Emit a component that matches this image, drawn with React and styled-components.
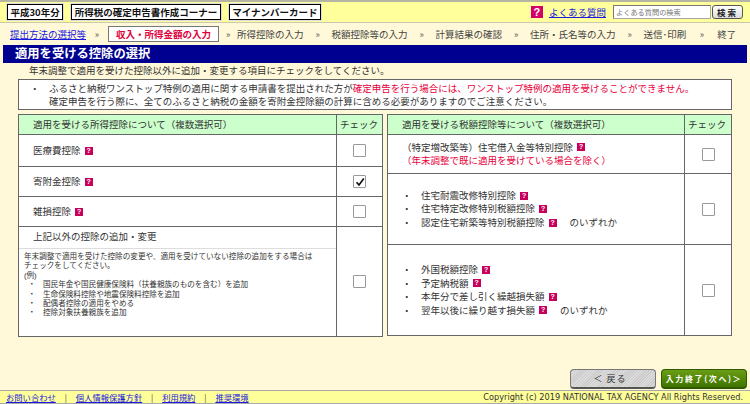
import React from 'react';
import styled, { createGlobalStyle } from 'styled-components';

const GlobalStyle = createGlobalStyle`
  html, body {
    margin: 0;
    padding: 0;
    background: #fff8d9;
  }
  body {
    font-family: "Noto Sans CJK JP", "Liberation Sans", sans-serif;
    font-size: 10px;
    color: #333;
  }
`;

const Page = styled.div`
  width: 750px;
  height: 404px;
  overflow: hidden;
  display: flex;
  flex-direction: column;
  position: relative;
`;

const TopBar = styled.div`
  height: 20px;
  border-top: 2px solid #b5b5a5;
  border-bottom: 1px solid #c9c9b0;
  background: #ffff9c;
  display: flex;
  align-items: center;
  padding: 0 7px 0 7px;
  gap: 8px;
`;

const Badge = styled.div`
  height: 14px;
  line-height: 14px;
  border: 1px solid #000;
  outline: 1px solid #ddd;
  background: #fff;
  color: #111;
  font-weight: 700;
  font-size: 9.5px;
  padding: 0 2.5px;
  white-space: nowrap;
`;

const TopRight = styled.div`
  margin-left: auto;
  display: flex;
  align-items: center;
`;

const HelpBig = styled.span`
  width: 12px;
  height: 12px;
  background: #d6006c;
  color: #fff;
  font: 700 11px/12px "Liberation Sans", sans-serif;
  text-align: center;
  margin-right: 6px;
`;

const Link = styled.a`
  color: #1a1ae0;
  text-decoration: underline;
  font-size: ${(p) => p.$size || 10}px;
  white-space: nowrap;
`;

const SearchBox = styled.div`
  width: 94px;
  height: 12px;
  line-height: 12px;
  margin-left: 7px;
  background: #fff;
  border: 1px solid #aaa;
  border-top-color: #777;
  border-left-color: #777;
  color: #777;
  font-size: 7.2px;
  padding-left: 2px;
  white-space: nowrap;
`;

const SearchButton = styled.div`
  width: 29px;
  height: 12px;
  line-height: 12px;
  margin-left: 1px;
  text-align: center;
  border: 1px solid #555;
  border-radius: 3px;
  background: linear-gradient(#fff, #ddd);
  font-weight: 700;
  font-size: 8.5px;
  letter-spacing: 2px;
  color: #222;
`;

const StepBar = styled.div`
  height: 22px;
  display: flex;
  align-items: center;
  padding-left: 10px;
  font-size: 9.5px;
  white-space: nowrap;
`;

const Sep = styled.span`
  width: ${(p) => p.$w}px;
  text-align: center;
  color: #555;
  font-size: 9px;
`;

const CurrentStep = styled.span`
  border: 1px solid #777;
  background: #fff;
  color: #e0003c;
  font-weight: 700;
  height: 14px;
  line-height: 14px;
  padding: 0 7px;
`;

const Step = styled.span`
  color: #444;
`;

const TitleBar = styled.h1`
  margin: 0 3px;
  height: 18px;
  line-height: 17px;
  background: #000090;
  color: #fff;
  font-size: 12.3px;
  font-weight: 700;
  padding-left: 12px;
`;

const Lead = styled.p`
  margin: 0;
  height: 16px;
  line-height: 15px;
  padding-left: 29px;
  font-size: 9.5px;
`;

const Notice = styled.div`
  margin: 0 0 0 18px;
  width: 714px;
  height: 31px;
  box-sizing: border-box;
  border: 1px solid #666;
  background: #fff;
  display: flex;
  font-size: 9.5px;
  line-height: 13px;
  padding: 2px 0 0 11px;
`;

const Dot = styled.span`
  width: ${(p) => p.$w || 19}px;
  flex: none;
`;

const Red = styled.span`
  color: #e8003c;
`;

const Tables = styled.div`
  display: flex;
  align-items: flex-start;
  gap: 4px;
  margin: 4px 0 0 18px;
`;

const Table = styled.div`
  width: ${(p) => p.$w}px;
  box-sizing: border-box;
  border: 1px solid #666;
  background: #fff;
  display: grid;
  grid-template-columns: 1fr ${(p) => p.$check}px;
`;

const HeadCell = styled.div`
  height: 19px;
  line-height: 19px;
  background: #ccffcc;
  border-bottom: 1px solid #666;
  border-right: ${(p) => (p.$check ? 'none' : '1px solid #666')};
  padding-left: ${(p) => (p.$check ? 3 : 14)}px;
  font-size: 9.5px;
  white-space: nowrap;
`;

const LabelCell = styled.div`
  height: ${(p) => p.$h}px;
  box-sizing: border-box;
  border-right: 1px solid #666;
  border-bottom: ${(p) => (p.$last ? 'none' : '1px solid #666')};
  display: flex;
  flex-direction: column;
  justify-content: center;
  padding-left: 14px;
  font-size: 9.5px;
  line-height: 13.5px;
`;

const CheckCell = styled.div`
  height: ${(p) => p.$h}px;
  box-sizing: border-box;
  border-bottom: ${(p) => (p.$last ? 'none' : '1px solid #666')};
  display: flex;
  align-items: center;
  justify-content: center;
`;

const Box = styled.span`
  width: 11px;
  height: 11px;
  border: 1px solid #999;
  border-radius: 1px;
  background: #fff;
  display: flex;
  align-items: center;
  justify-content: center;
`;

const Help = styled.span`
  display: inline-block;
  width: 8px;
  height: 8px;
  background: #c8005c;
  color: #fff;
  font: 700 7px/8px "Liberation Sans", sans-serif;
  text-align: center;
  margin-left: 4px;
  vertical-align: middle;
`;

const Label = styled.div`
  display: flex;
  align-items: center;
  white-space: nowrap;
`;

const Trailing = styled.span`
  margin-left: 13px;
`;

const OtherCell = styled.div`
  height: 109px;
  box-sizing: border-box;
  border-right: 1px solid #666;
  display: flex;
  flex-direction: column;
`;

const OtherTitle = styled.div`
  height: 21px;
  line-height: 19px;
  padding-left: 14px;
  font-size: 9.5px;
  border-bottom: 1px solid #ddd;
`;

const OtherBody = styled.div`
  padding: 3px 0 0 5px;
  font-family: "Liberation Sans", "Noto Sans CJK JP", sans-serif;
  font-size: 7.6px;
  line-height: 9.4px;
  color: #333;
`;

const OtherItem = styled.div`
  display: flex;
  white-space: nowrap;
  padding-left: 4px;
`;

const Actions = styled.div`
  position: absolute;
  right: 3px;
  top: 369px;
  display: flex;
  gap: 5px;
`;

const BackButton = styled.div`
  width: 86px;
  height: 20px;
  line-height: 18px;
  box-sizing: border-box;
  border: 1px solid #777;
  border-bottom: 2px solid #555;
  border-radius: 4px;
  background: repeating-linear-gradient(135deg, #dcdcdc 0 1px, #cbcbcb 1px 2px);
  text-align: center;
  font-size: 9px;
  letter-spacing: 1px;
  color: #333;
  padding-right: 6px;
`;

const NextButton = styled.div`
  width: 86px;
  height: 20px;
  line-height: 18px;
  box-sizing: border-box;
  border: 1px solid #2f5a00;
  border-bottom-width: 2px;
  border-radius: 4px;
  background: linear-gradient(#6a9e14, #3f7400);
  color: #fff;
  text-align: center;
  font-weight: 700;
  font-size: 8px;
  letter-spacing: 1.6px;
  white-space: nowrap;
`;

const Footer = styled.div`
  position: absolute;
  left: 0;
  right: 0;
  top: 390px;
  height: 12px;
  border-top: 1px solid #aaa;
  border-bottom: 1px solid #aaa;
  background: #ffff99;
  display: flex;
  align-items: center;
  padding: 0 7px 0 6px;
`;

const FooterSep = styled.span`
  width: 20px;
  text-align: center;
  color: #444;
  font-size: 8px;
`;

const Copyright = styled.span`
  margin-left: auto;
  font: 8.2px "DejaVu Sans", sans-serif;
  color: #333;
  white-space: nowrap;
`;

const Check = () => (
  <svg width="10" height="10" viewBox="0 0 10 10">
    <path d="M1.5 5.2 L4 8 L8.8 1.6" fill="none" stroke="#111" strokeWidth="1.7" />
  </svg>
);

const App = () => (
  <Page>
    <GlobalStyle />
    <TopBar>
      <Badge>平成30年分</Badge>
      <Badge>所得税の確定申告書作成コーナー</Badge>
      <Badge>マイナンバーカード</Badge>
      <TopRight>
        <HelpBig>?</HelpBig>
        <Link $size={9.5}>よくある質問</Link>
        <SearchBox>よくある質問の検索</SearchBox>
        <SearchButton>検索</SearchButton>
      </TopRight>
    </TopBar>
    <StepBar>
      <Link $size={9.5}>提出方法の選択等</Link>
      <Sep $w={22}>»</Sep>
      <CurrentStep>収入・所得金額の入力</CurrentStep>
      <Sep $w={18}>»</Sep>
      <Step>所得控除の入力</Step>
      <Sep $w={28}>»</Sep>
      <Step>税額控除等の入力</Step>
      <Sep $w={28}>»</Sep>
      <Step>計算結果の確認</Step>
      <Sep $w={28}>»</Sep>
      <Step>住所・氏名等の入力</Step>
      <Sep $w={28}>»</Sep>
      <Step>送信･印刷</Step>
      <Sep $w={31}>»</Sep>
      <Step>終了</Step>
    </StepBar>
    <TitleBar>適用を受ける控除の選択</TitleBar>
    <Lead>年末調整で適用を受けた控除以外に追加・変更する項目にチェックをしてください。</Lead>
    <Notice>
      <Dot>・</Dot>
      <div>
        ふるさと納税ワンストップ特例の適用に関する申請書を提出された方が<Red>確定申告を行う場合には、ワンストップ特例の適用を受けることができません。</Red>
        <br />
        確定申告を行う際に、全てのふるさと納税の金額を寄附金控除額の計算に含める必要がありますのでご注意ください。
      </div>
    </Notice>
    <Tables>
      <Table $w={365} $check={45}>
        <HeadCell>適用を受ける所得控除について（複数選択可）</HeadCell>
        <HeadCell $check>チェック</HeadCell>
        <LabelCell $h={32}><Label>医療費控除<Help>?</Help></Label></LabelCell>
        <CheckCell $h={32}><Box /></CheckCell>
        <LabelCell $h={30}><Label>寄附金控除<Help>?</Help></Label></LabelCell>
        <CheckCell $h={30}><Box><Check /></Box></CheckCell>
        <LabelCell $h={30}><Label>雑損控除<Help>?</Help></Label></LabelCell>
        <CheckCell $h={30}><Box /></CheckCell>
        <OtherCell>
          <OtherTitle>上記以外の控除の追加・変更</OtherTitle>
          <OtherBody>
            年末調整で適用を受けた控除の変更や、適用を受けていない控除の追加をする場合は
            <br />
            チェックをしてください。
            <br />
            (例)
            <OtherItem><Dot $w={15}>・</Dot>国民年金や国民健康保険料（扶養親族のものを含む）を追加</OtherItem>
            <OtherItem><Dot $w={15}>・</Dot>生命保険料控除や地震保険料控除を追加</OtherItem>
            <OtherItem><Dot $w={15}>・</Dot>配偶者控除の適用をやめる</OtherItem>
            <OtherItem><Dot $w={15}>・</Dot>控除対象扶養親族を追加</OtherItem>
          </OtherBody>
        </OtherCell>
        <CheckCell $h={109} $last><Box /></CheckCell>
      </Table>
      <Table $w={345} $check={46}>
        <HeadCell>適用を受ける税額控除等について（複数選択可）</HeadCell>
        <HeadCell $check>チェック</HeadCell>
        <LabelCell $h={39}>
          <Label>（特定増改築等）住宅借入金等特別控除<Help>?</Help></Label>
          <Red>（年末調整で既に適用を受けている場合を除く）</Red>
        </LabelCell>
        <CheckCell $h={39}><Box /></CheckCell>
        <LabelCell $h={71}>
          <Label><Dot>・</Dot>住宅耐震改修特別控除<Help>?</Help></Label>
          <Label><Dot>・</Dot>住宅特定改修特別税額控除<Help>?</Help></Label>
          <Label><Dot>・</Dot>認定住宅新築等特別税額控除<Help>?</Help><Trailing>のいずれか</Trailing></Label>
        </LabelCell>
        <CheckCell $h={71}><Box /></CheckCell>
        <LabelCell $h={90} $last>
          <Label><Dot>・</Dot>外国税額控除<Help>?</Help></Label>
          <Label><Dot>・</Dot>予定納税額<Help>?</Help></Label>
          <Label><Dot>・</Dot>本年分で差し引く繰越損失額<Help>?</Help></Label>
          <Label><Dot>・</Dot>翌年以後に繰り越す損失額<Help>?</Help><Trailing>のいずれか</Trailing></Label>
        </LabelCell>
        <CheckCell $h={90} $last><Box /></CheckCell>
      </Table>
    </Tables>
    <Actions>
      <BackButton>＜ 戻る</BackButton>
      <NextButton>入力終了(次へ)＞</NextButton>
    </Actions>
    <Footer>
      <Link $size={8.3}>お問い合わせ</Link>
      <FooterSep>|</FooterSep>
      <Link $size={8.3}>個人情報保護方針</Link>
      <FooterSep>|</FooterSep>
      <Link $size={8.3}>利用規約</Link>
      <FooterSep>|</FooterSep>
      <Link $size={8.3}>推奨環境</Link>
      <Copyright>Copyright (c) 2019 NATIONAL TAX AGENCY All Rights Reserved.</Copyright>
    </Footer>
  </Page>
);

export default App;
